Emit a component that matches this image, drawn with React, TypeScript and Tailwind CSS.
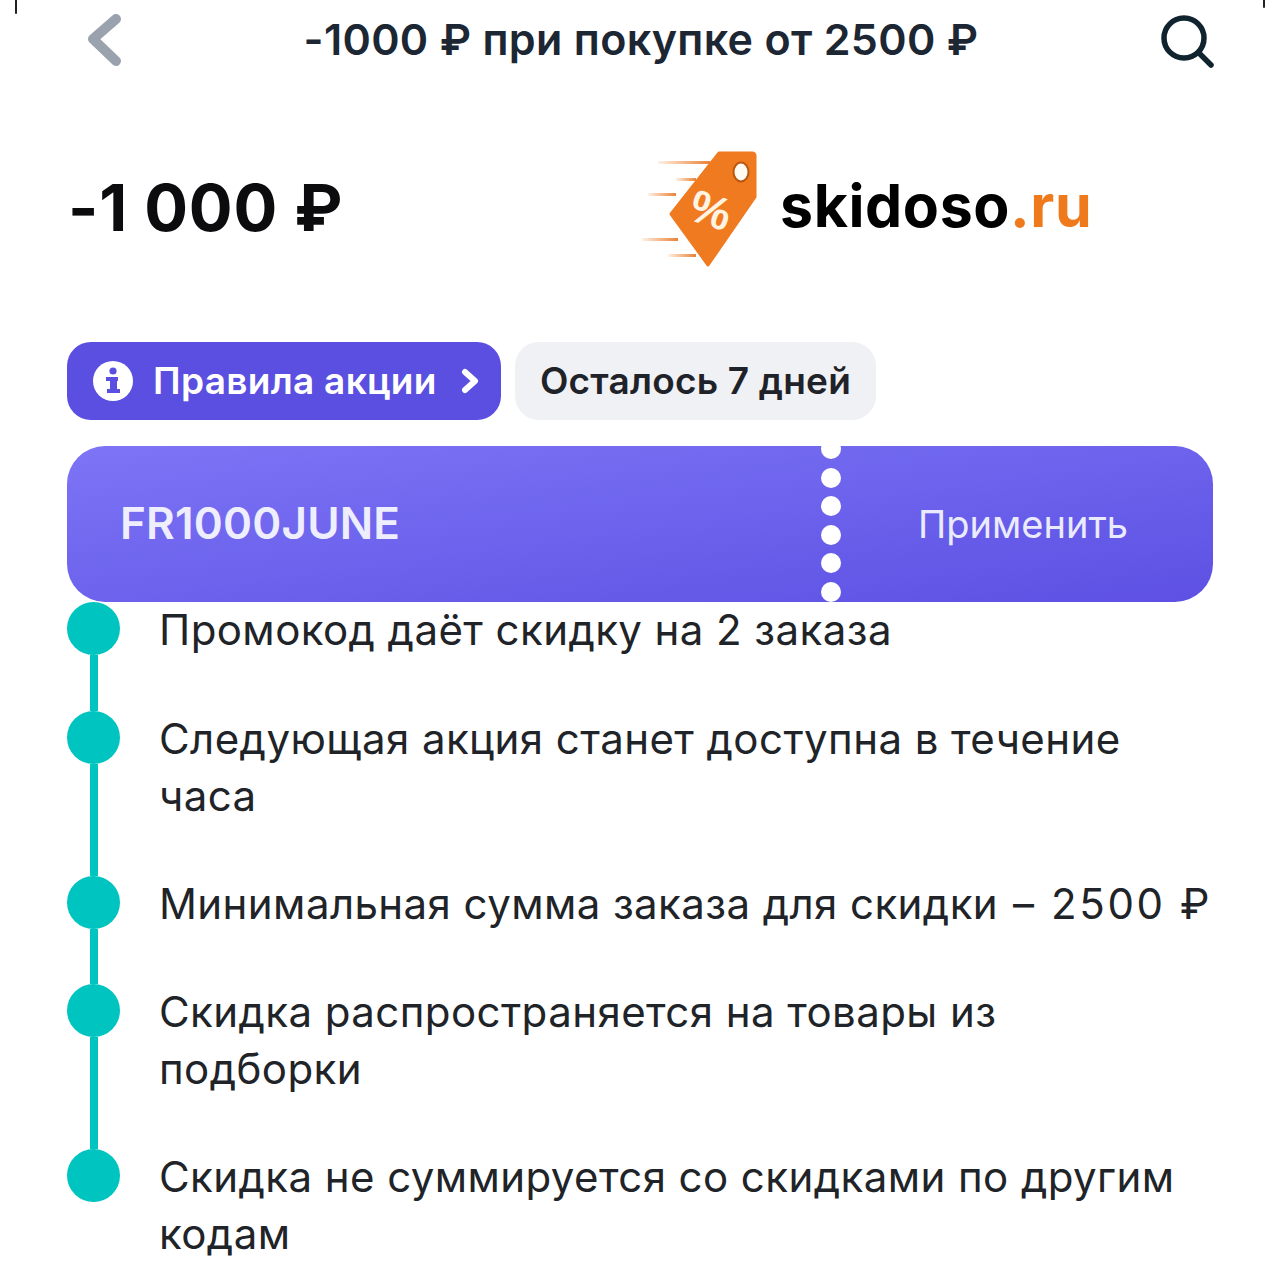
const rules = [
  { text: "Промокод даёт скидку на 2 заказа", h: "h-[109px]" },
  { text: "Следующая акция станет доступна в течение\nчаса", h: "h-[165px]" },
  { text: "Минимальная сумма заказа для скидки", tail: "– 2500 ₽", h: "h-[108px]" },
  { text: "Скидка распространяется на товары из\nподборки", h: "h-[165px]" },
  { text: "Скидка не суммируется со скидками по другим\nкодам", h: "h-[110px]", last: true },
];

const Logo = () => (
  <svg width="130" height="130" viewBox="640 145 130 130" className="shrink-0 mt-[4px]">
    <defs>
      <linearGradient id="speed" x1="0" y1="0" x2="1" y2="0">
        <stop offset="0" stopColor="#f07a1f" stopOpacity="0.1" />
        <stop offset="1" stopColor="#e8833a" />
      </linearGradient>
    </defs>
    <g fill="url(#speed)">
      <rect x="658" y="161" width="52" height="3" />
      <rect x="676" y="178" width="20" height="3" />
      <rect x="648" y="193" width="28" height="3" />
      <rect x="642" y="238" width="36" height="3" />
      <rect x="668" y="254" width="28" height="3" />
    </g>
    <path
      d="M719 153 L752 153 Q755 153 755 156 L755 197 L708 265 L671 214 Z"
      fill="#f07a1f"
      stroke="#f07a1f"
      strokeWidth="3"
      strokeLinejoin="round"
    />
    <ellipse cx="741" cy="172" rx="7.5" ry="9.5" fill="#fffaf2" stroke="#b9560f" strokeWidth="2" />
    <text
      x="711"
      y="226"
      textAnchor="middle"
      fill="#fff3e2"
      fontSize="46"
      fontWeight="700"
      fontFamily="'Liberation Sans', sans-serif"
      transform="rotate(18 711 210)"
    >
      %
    </text>
  </svg>
);

export default function App() {
  return (
    <div className="relative w-[1280px] h-[1280px] overflow-hidden bg-white font-['Inter',sans-serif] text-[#1f2226]">
      {/* screen corners */}
      <div className="absolute left-[15px] top-0 w-[2px] h-[14px] bg-[#222] rounded-b-full" />
      <div className="absolute left-[1263px] top-0 w-[2px] h-[8px] bg-[#222] rounded-b-full" />

      {/* header */}
      <div className="h-[80px] flex items-center justify-between pl-[84px] pr-[62px]">
        <svg width="40" height="56" viewBox="0 0 40 56" fill="none">
          <path d="M32 7 L9 27 L32 49" stroke="#9aa2ad" strokeWidth="10" strokeLinecap="round" strokeLinejoin="round" />
        </svg>
        <h1 className="-mt-[2px] text-[43px] font-semibold tracking-[0.33px] text-[#1c2733]">-1000 ₽ при покупке от 2500 ₽</h1>
        <svg width="60" height="60" viewBox="0 0 60 60" fill="none" className="text-[#10242f]">
          <circle cx="26" cy="28" r="20" stroke="currentColor" strokeWidth="5.5" />
          <path d="M41 43 L53 55" stroke="currentColor" strokeWidth="5.5" strokeLinecap="round" />
        </svg>
      </div>

      {/* price + logo */}
      <div className="h-[262px] pb-[6px] flex items-center pl-[68px]">
        <div className="w-[572px] text-[65px] font-bold tracking-[0.8px] text-[#0c0c0e]">-1 000 ₽</div>
        <Logo />
        <div className="ml-[10px] pb-[4px] text-[59px] font-bold tracking-[0.6px] text-black">
          skidoso<span className="text-[#ef7a1c]">.ru</span>
        </div>
      </div>

      {/* pills */}
      <div className="flex gap-[14px] pl-[67px]">
        <div className="w-[434px] h-[78px] rounded-[24px] bg-[#5a4fe0] flex items-center pl-[26px] pr-[20px] text-white">
          <svg width="40" height="40" viewBox="0 0 40 40" className="shrink-0">
            <circle cx="20" cy="20" r="20" fill="#fff" />
            <circle cx="20" cy="10" r="3.6" fill="#5a4fe0" />
            <rect x="13" y="16" width="12" height="4" fill="#5a4fe0" />
            <rect x="17" y="16" width="7" height="15" fill="#5a4fe0" />
            <rect x="14" y="28" width="13" height="4" fill="#5a4fe0" />
          </svg>
          <span className="ml-[20px] text-[37px] font-semibold tracking-[0.3px]">Правила акции</span>
          <svg width="20" height="28" viewBox="0 0 20 28" fill="none" className="ml-auto">
            <path d="M4 5 L14 14 L4 23" stroke="#fff" strokeWidth="6" strokeLinecap="round" strokeLinejoin="round" />
          </svg>
        </div>
        <div className="w-[361px] h-[78px] rounded-[24px] bg-[#f0f1f5] flex items-center justify-center text-[37px] font-semibold tracking-[0.2px] text-[#1f2329]">
          Осталось 7 дней
        </div>
      </div>

      {/* promo ticket */}
      <div className="mt-[26px] mx-[67px] h-[156px] rounded-[38px] overflow-hidden bg-gradient-to-br from-[#7d74f6] to-[#5d50e3] flex text-white">
        <div className="w-[754px] pl-[53px] pb-[3px] flex items-center text-[44px] font-semibold tracking-[0.2px] text-[#eeeeff]">FR1000JUNE</div>
        <div className="w-[20px] -mt-[7px] flex flex-col justify-between">
          {[0, 1, 2, 3, 4, 5].map((i) => (
            <div key={i} className="w-[20px] h-[20px] rounded-full bg-white" />
          ))}
        </div>
        <div className="flex-1 flex items-center justify-center pr-[8px] text-[38px] text-[#ebebff]">Применить</div>
      </div>

      {/* rules timeline */}
      <div className="pl-[67px] pr-[60px]">
        {rules.map((rule) => (
          <div key={rule.text} className={`flex ${rule.h}`}>
            <div className="w-[53px] shrink-0 flex flex-col items-center">
              <div className="w-[53px] h-[53px] rounded-full bg-[#00c4bf] shrink-0" />
              {!rule.last && <div className="w-[8px] flex-1 bg-[#00c4bf]" />}
            </div>
            <p className="ml-[39px] -mt-[1px] h-fit text-[42px] leading-[57px] tracking-[0.42px] whitespace-pre-line text-[#202327]">
              {rule.text}
              {rule.tail && <span className="ml-[15px] tracking-[2.6px]">{rule.tail}</span>}
            </p>
          </div>
        ))}
      </div>
    </div>
  );
}
